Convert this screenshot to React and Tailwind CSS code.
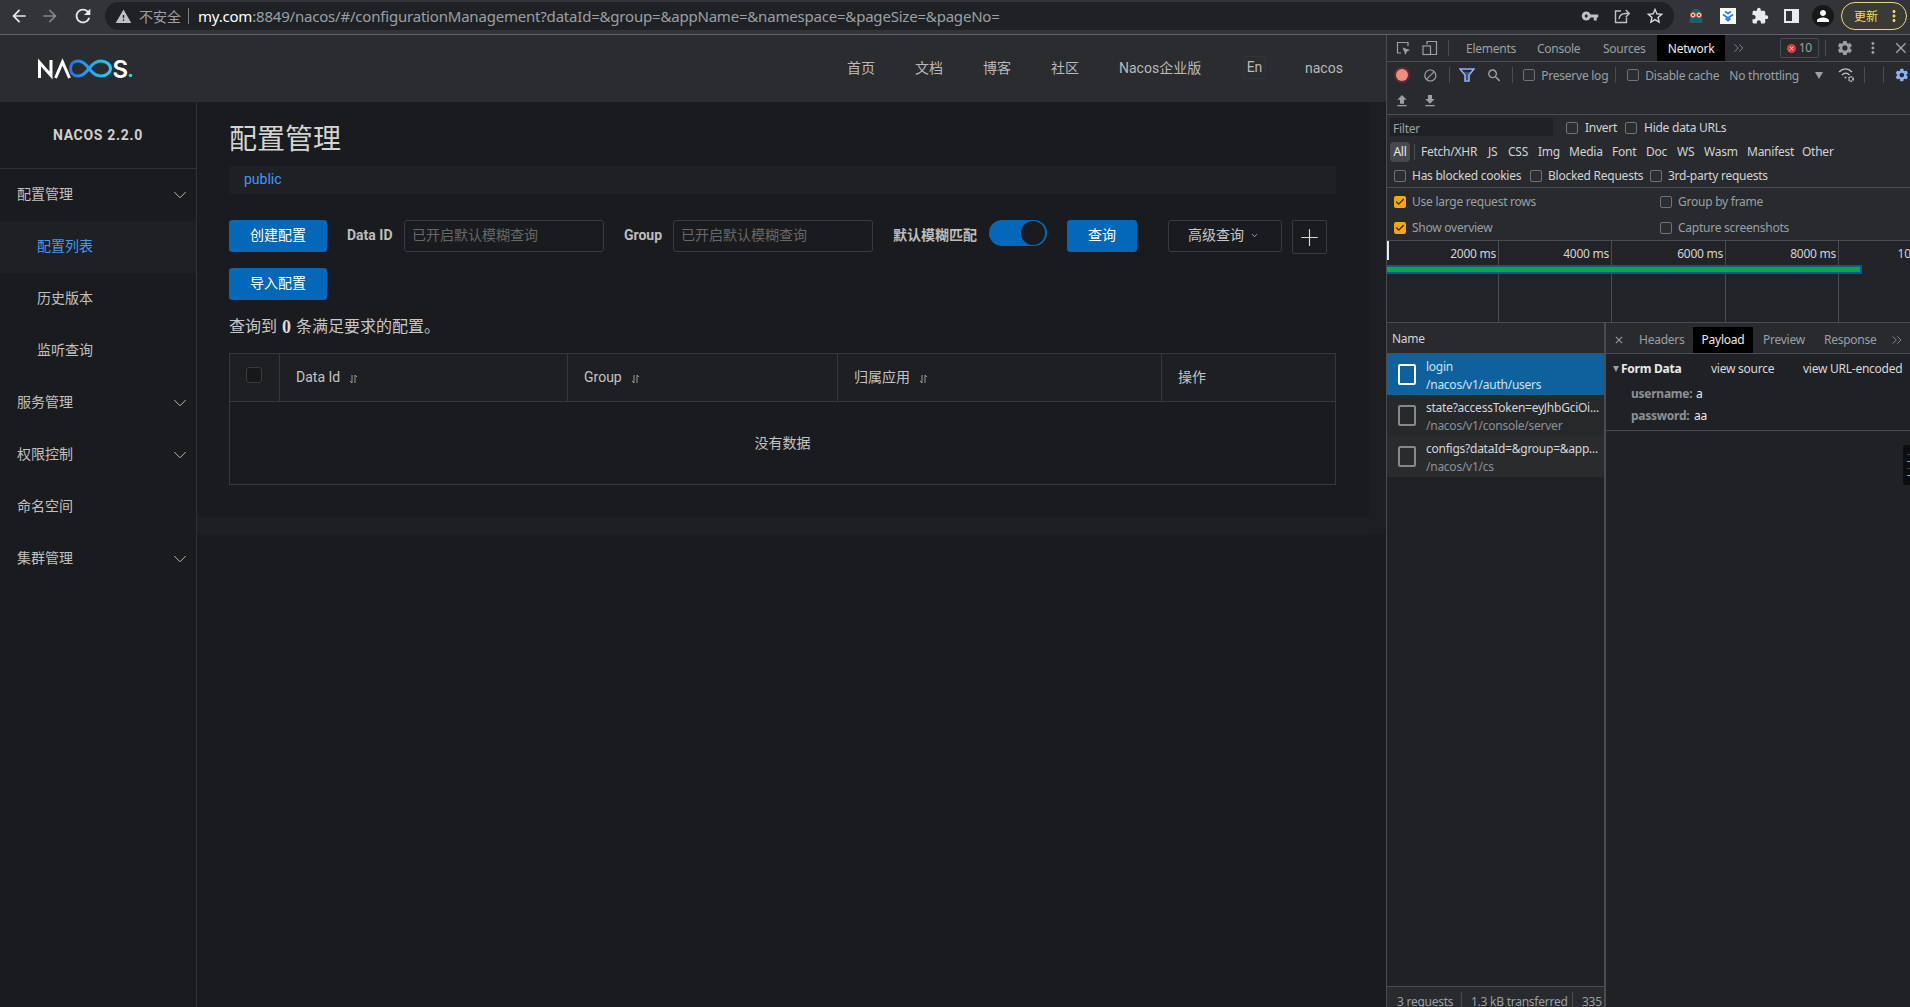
import React from "react";
import { MdArrowBack, MdArrowForward, MdRefresh, MdWarning, MdVpnKey, MdStarBorder, MdExtension, MdPerson, MdSettings, MdSearch, MdBlock, MdClose, MdMoreVert, MdFileUpload, MdFileDownload } from "react-icons/md";
import { ChevronDown, ChevronsRight, Plus, Check } from "lucide-react";

const APP = "font-['Roboto','Noto_Sans_CJK_SC',sans-serif]";
const DT = "font-['Noto_Sans','Noto_Sans_CJK_SC',sans-serif]";

function Logo() {
  return (
    <svg width="97" height="20" viewBox="0 0 97 20" className="block overflow-visible">
      <defs>
        <linearGradient id="inf" x1="0" x2="1" y1="0" y2="0">
          <stop offset="0" stopColor="#2b6ff0" />
          <stop offset="0.5" stopColor="#1fa8f0" />
          <stop offset="1" stopColor="#1fd0f0" />
        </linearGradient>
      </defs>
      <path d="M2.500 19V3.500L14 16.500V1" fill="none" stroke="#fff" strokeWidth="3" />
      <path d="M18.500 19L25.500 3L32.500 19" fill="none" stroke="#fff" strokeWidth="3" />
      <path d="M52 9.500C48 4 45 2 41 2C36 2 33.500 5.500 33.500 9.500C33.500 13.500 36 17 41 17C45 17 48 15 52 9.500C56 4 59 2 64 2C69 2 73.500 5.500 73.500 9.500C73.500 13.500 69 17 64 17C59 17 56 15 52 9.500Z" fill="none" stroke="url(#inf)" strokeWidth="3" />
      <text x="75.500" y="18.500" fontFamily="Inter, sans-serif" fontWeight="600" fontSize="24" fill="#fff">S</text>
      <circle cx="93.500" cy="16.500" r="1.800" fill="#22d3ee" />
    </svg>
  );
}

function Share() {
  return (
    <svg width="18" height="18" viewBox="0 0 18 18" fill="none" stroke="#bdc1c6" strokeWidth="1.400" className="block">
      <path d="M8 4H2.500V15.500H13.500V10.500" />
      <path d="M6 12C6.500 8.500 9 6.500 12.500 6.500H16M12.800 3L16.300 6.500L12.800 10" />
    </svg>
  );
}

function Owl() {
  return (
    <svg width="16" height="16" viewBox="0 0 16 16" className="block">
      <path d="M1 15L3.500 4C4 1.500 6 1 8 1S12 1.500 12.500 4L15 15Z" fill="#1d5f6b" />
      <circle cx="5" cy="7" r="2.500" fill="#f4f0e8" stroke="#e0592a" />
      <circle cx="11" cy="7" r="2.500" fill="#f4f0e8" stroke="#e0592a" />
      <circle cx="5" cy="7" r="1" fill="#222" />
      <circle cx="11" cy="7" r="1" fill="#222" />
    </svg>
  );
}

function BlueExt() {
  return (
    <div className="w-4 h-4 bg-white flex items-center justify-center">
      <svg width="12" height="12" viewBox="0 0 12 12" fill="none" stroke="#2b7cf0" strokeWidth="1.800" className="block">
        <path d="M3 1.500L6 3.500L9 1.500M1 4.500L6 8L11 4.500M3.500 8.500L6 10.500L8.500 8.500" />
      </svg>
    </div>
  );
}

function ChromeBar() {
  return (
    <div className="h-[35px] shrink-0 flex items-stretch bg-[#323437] border-b border-[#5f6164] pt-[2px] pb-[4px] pl-[9px]">
      <div className="flex items-center text-[#e8eaed]">
        <MdArrowBack size={20} />
        <MdArrowForward size={20} className="ml-[11px] text-[#80868b]" />
        <MdRefresh size={22} className="ml-[12px]" />
      </div>
      <div className="ml-[11px] w-[1569px] h-[28px] rounded-full bg-[#202124] flex items-center pl-[10px] pr-[9px] font-['Noto_Sans','Noto_Sans_CJK_SC',sans-serif] text-[15px]">
        <MdWarning size={17} className="text-[#bdc1c6] shrink-0" />
        <span className="ml-[7px] text-[14px] text-[#9aa0a6] whitespace-nowrap">不安全</span>
        <span className="ml-[7px] w-px h-[16px] bg-[#7a7d81]" />
        <span className="ml-[9px] flex-1 whitespace-nowrap text-[#9aa0a6] tracking-[-0.2px]"><span className="text-white">my.com</span>:8849/nacos/#/configurationManagement?dataId=&group=&appName=&namespace=&pageSize=&pageNo=</span>
        <div className="flex items-center gap-[14px]">
          <MdVpnKey size={18} className="text-[#bdc1c6]" />
          <Share />
          <MdStarBorder size={20} className="text-[#dadce0]" />
        </div>
      </div>
      <div className="ml-[14px] flex items-center">
        <Owl />
        <div className="ml-4"><BlueExt /></div>
        <MdExtension size={18} className="ml-[15px] text-[#e8eaed]" />
        <div className="ml-[15px] w-[15px] h-[14px] bg-[#e8eaed] flex justify-start p-[2px]"><div className="w-[6px] h-full bg-[#323437]" /></div>
        <div className="ml-[13px] w-[22px] h-[22px] rounded-full bg-[#17181a] flex items-center justify-center"><MdPerson size={18} className="text-white" /></div>
        <div className="ml-[7px] w-[66px] h-[28px] rounded-full border border-[#f1d57a] bg-[#3a3b36] flex items-center pl-[12px] text-[12px] whitespace-nowrap font-['Noto_Sans_CJK_SC',sans-serif] text-[#fdd663]">
          <span>更新</span>
          <MdMoreVert size={18} className="ml-[7px]" />
        </div>
      </div>
    </div>
  );
}

function NavHeader() {
  return (
    <div className={`h-[67px] shrink-0 bg-[#2b2c2f] flex items-center pl-[37px] pr-[40px] text-[14px] text-[#b9b9b9] ${APP}`}>
      <Logo />
      <div className="ml-auto flex items-center gap-10 whitespace-nowrap">
        <span className="w-[28px]">首页</span>
        <span className="w-[28px]">文档</span>
        <span className="w-[28px]">博客</span>
        <span className="w-[28px]">社区</span>
        <span className="w-[84px]">Nacos企业版</span>
        <span className="w-[23px] h-[23px] -mt-[2px] flex items-center justify-center rounded-[2px] border border-[#333438]">En</span>
        <span className="w-[41px] -ml-px">nacos</span>
      </div>
    </div>
  );
}

function MenuRow({ label, arrow, active, sub }) {
  return (
    <div className={`h-[52px] flex items-center ${sub ? "pl-[37px]" : "pl-[17px]"} pr-[5px] ${active ? "bg-[#1f2023] text-[#3d9bf5]" : "text-[#c0c0c0]"}`}>
      <span className="flex-1 pb-[2px]">{label}</span>
      {arrow && <ChevronDown size={22} strokeWidth={1} className="text-[#c8c8c8]" />}
    </div>
  );
}

function Sidebar() {
  return (
    <div className={`w-[197px] shrink-0 border-r border-[#303134] bg-[#1a1b1e] text-[14px] ${APP}`}>
      <div className="h-[67px] border-b border-[#303134] flex items-center justify-center font-bold text-[#d0d0d0] text-[14px] tracking-[0.7px]">NACOS 2.2.0</div>
      <MenuRow label="配置管理" arrow />
      <MenuRow label="配置列表" sub active />
      <MenuRow label="历史版本" sub />
      <MenuRow label="监听查询" sub />
      <MenuRow label="服务管理" arrow />
      <MenuRow label="权限控制" arrow />
      <MenuRow label="命名空间" />
      <MenuRow label="集群管理" arrow />
    </div>
  );
}

function Btn({ children, className = "" }) {
  return <div className={`h-8 rounded-[3px] bg-[#0468b8] text-white flex items-center justify-center text-[14px] pb-[2px] ${className}`}>{children}</div>;
}

function SortIcon() {
  return (
    <svg width="9" height="10" viewBox="0 0 9 10" fill="none" stroke="#9a9a9a" strokeWidth="1" className="block ml-[9px] mt-[3px] shrink-0">
      <path d="M3 1V9M1 7L3 9M6 9V1M6 1L8 3" />
    </svg>
  );
}

function Main() {
  return (
    <div className={`flex-1 min-w-0 bg-[#1a1b1e] ${APP}`}>
      <div className="h-[432px] flex">
        <div className="w-[1172px] h-full flex flex-col">
          <div className="pl-8 pr-[33px]">
            <div className="pt-5 text-[28px] leading-[36px] text-[#d4d4d4]">配置管理</div>
            <div className="mt-2 h-7 bg-[#1f2023] pl-[15px] pb-[2px] flex items-center text-[14px] text-[#3d9bf5]">public</div>
            <div className="mt-[26px] flex items-start text-[14px] whitespace-nowrap">
              <Btn className="w-[98px]">创建配置</Btn>
              <span className="ml-5 w-[45px] h-8 pb-[2px] flex items-center font-bold text-[#bdbdbd]">Data ID</span>
              <div className="ml-3 w-[200px] h-8 rounded-[3px] border border-[#3a3b3e] pl-[7px] pb-[2px] flex items-center text-[#676767]">已开启默认模糊查询</div>
              <span className="ml-5 w-[37px] h-8 pb-[2px] flex items-center font-bold text-[#bdbdbd]">Group</span>
              <div className="ml-3 w-[200px] h-8 rounded-[3px] border border-[#3a3b3e] pl-[7px] pb-[2px] flex items-center text-[#676767]">已开启默认模糊查询</div>
              <span className="ml-5 w-[84px] h-8 pb-[2px] flex items-center font-bold text-[#bdbdbd]">默认模糊匹配</span>
              <div className="ml-3 w-[58px] h-[26px] rounded-full bg-[#0468b8] flex items-center justify-end pr-[2px]">
                <div className="w-6 h-6 rounded-full bg-[#1a1b1e]" />
              </div>
              <Btn className="ml-5 w-[70px]">查询</Btn>
              <div className="ml-[31px] w-[114px] h-8 rounded-[3px] border border-[#3a3b3e] pr-[3px] pb-[2px] flex items-center justify-center text-[#c8c8c8]">
                <span>高级查询</span>
                <ChevronDown size={9} className="ml-[6px]" />
              </div>
              <div className="ml-[10px] w-[35px] h-[34px] rounded-[2px] border border-[#3a3b3e] flex items-center justify-center text-[#d8d8d8]">
                <Plus size={27} strokeWidth={1} />
              </div>
            </div>
            <Btn className="mt-[14px] w-[98px]">导入配置</Btn>
            <div className="mt-[15px] h-6 flex items-center text-[16px] text-[#c8c8c8] whitespace-nowrap">
              查询到<b className="mx-[5px] text-[18px] font-['Liberation_Serif',serif] text-[#dcdcdc]">0</b>条满足要求的配置。
            </div>
            <div className="mt-[14px] border border-[#37383b] text-[14px] text-[#c4c4c4]">
              <div className="grid grid-cols-[50px_288px_270px_324px_173px] h-[48px] bg-[#1e1f22] border-b border-[#37383b]">
                <div className="border-r border-[#37383b] pl-4 pt-[13px]">
                  <div className="w-4 h-4 rounded-[3px] border border-[#3a3b3e] bg-[#17181a]" />
                </div>
                <div className="border-r border-[#37383b] pl-4 flex items-center"><span>Data Id</span><SortIcon /></div>
                <div className="border-r border-[#37383b] pl-4 flex items-center"><span>Group</span><SortIcon /></div>
                <div className="border-r border-[#37383b] pl-4 flex items-center"><span>归属应用</span><SortIcon /></div>
                <div className="pl-4 flex items-center">操作</div>
              </div>
              <div className="h-[82px] flex items-center justify-center">没有数据</div>
            </div>
          </div>
          <div className="mt-auto h-[17px] bg-[#1e1f22]" />
        </div>
        <div className="flex-1 bg-[#1d1e21]" />
      </div>
    </div>
  );
}

function Cb({ on, className = "" }) {
  return on ? (
    <div className={`w-3 h-3 rounded-[2px] bg-[#fca700] flex items-center justify-center shrink-0 ${className}`}><Check size={10} strokeWidth={3} className="text-[#202124]" /></div>
  ) : (
    <div className={`w-3 h-3 rounded-[2px] border border-[#6f7276] bg-[#2c2d30] shrink-0 ${className}`} />
  );
}

function Sep({ className = "" }) {
  return <span className={`w-px h-[16px] bg-[#494c50] shrink-0 ${className}`} />;
}

function InspectIcon() {
  return (
    <svg width="15" height="15" viewBox="0 0 15 15" fill="none" stroke="#9aa0a6" strokeWidth="1.200" className="block shrink-0">
      <path d="M5 12H1.500V1.500H12V5" />
      <path d="M6.500 6.500L14 9L11 10.500L9.500 14Z" fill="#9aa0a6" stroke="none" />
    </svg>
  );
}

function DeviceIcon() {
  return (
    <svg width="16" height="16" viewBox="0 0 16 16" fill="none" stroke="#9aa0a6" strokeWidth="1.200" className="block shrink-0">
      <path d="M5 4.500V1.500H14.500V14.500H9" />
      <rect x="1" y="6" width="7.500" height="8.500" />
    </svg>
  );
}

function FunnelIcon() {
  return (
    <svg width="16" height="14" viewBox="0 0 16 14" fill="none" stroke="#8ab4f8" strokeWidth="1.600" className="block shrink-0">
      <path d="M1 1H15L10 7V13H6V7Z" />
      <path d="M4 4H12L10 7V12H6V7Z" fill="#8ab4f8" fillOpacity="0.300" stroke="none" />
    </svg>
  );
}

function WifiGear() {
  return (
    <svg width="17" height="16" viewBox="0 0 17 16" fill="none" stroke="#bdc1c6" strokeWidth="1.400" className="block shrink-0">
      <path d="M1 5C5 1 10 1 14 5M4 8C6.500 5.500 9 5.500 11.500 8" />
      <circle cx="7.500" cy="10.500" r="1" fill="#bdc1c6" stroke="none" />
      <circle cx="13" cy="12" r="2.200" strokeWidth="1.600" strokeDasharray="1.500 0.700" />
    </svg>
  );
}

function FileIcon({ on }) {
  return <div className={`w-[18px] h-[21px] rounded-[2px] border-2 shrink-0 ${on ? "border-white" : "border-[#85888c]"}`} />;
}

function Req({ name, path, on, className = "" }) {
  return (
    <div className={`h-[41px] flex items-center pl-[11px] pr-[2px] ${on ? "bg-[#0e619c]" : ""} ${className}`}>
      <FileIcon on={on} />
      <div className="ml-[10px] pt-[2px] min-w-0 flex-1 leading-[18px] text-[12px] tracking-[-0.25px]">
        <div className={`whitespace-nowrap overflow-hidden ${on ? "text-[#cfe2f2]" : "text-[#d5d7da]"}`}>{name}</div>
        <div className={`whitespace-nowrap ${on ? "text-[#cfe2f2]" : "text-[#8d9196]"}`}>{path}</div>
      </div>
    </div>
  );
}

function DevTools() {
  const border = "border-[#494c50]";
  return (
    <div className={`relative flex-1 min-w-0 h-[972px] overflow-hidden flex flex-col bg-[#292a2d] border-l ${border} text-[12px] tracking-[-0.25px] text-[#9aa0a6] ${DT}`}>
      <div className={`h-[27px] shrink-0 border-b ${border} flex items-center pl-[9px] whitespace-nowrap`}>
        <InspectIcon />
        <div className="ml-[11px]"><DeviceIcon /></div>
        <Sep className="ml-[10px]" />
        <span className="ml-[17px] w-[48px] pt-[2px]">Elements</span>
        <span className="ml-[23px] w-[43px] pt-[2px]">Console</span>
        <span className="ml-[23px] w-[42px] pt-[2px]">Sources</span>
        <span className="ml-[12px] w-[69px] self-stretch bg-black text-[#e8eaed] pt-[2px] flex items-center justify-center">Network</span>
        <ChevronsRight size={16} strokeWidth={1.2} className="ml-[6px]" />
        <div className={`ml-[33px] w-[39px] h-5 rounded-[2px] border ${border} flex items-center justify-center`}>
          <span className="w-[9px] h-[9px] rounded-full bg-[#e23a3f] flex items-center justify-center mr-[3px]"><MdClose size={7} className="text-white" /></span>
          <span>10</span>
        </div>
        <Sep className="ml-[6px]" />
        <MdSettings size={18} className="ml-[10px]" />
        <MdMoreVert size={18} className="ml-[11px]" />
        <MdClose size={18} className="ml-[10px]" />
      </div>

      <div className="h-[26px] shrink-0 flex items-center pl-[9px] whitespace-nowrap">
        <span className="w-3 h-3 rounded-full bg-[#f28b82] ring-[2px] ring-[#5a2f2e] shrink-0" />
        <MdBlock size={15} className="ml-[15px]" />
        <Sep className="ml-[11px]" />
        <div className="ml-[9px]"><FunnelIcon /></div>
        <MdSearch size={17} className="ml-[11px]" />
        <Sep className="ml-[10px]" />
        <Cb className="ml-[10px]" />
        <span className="ml-[6px] w-[64px] pt-[2px]">Preserve log</span>
        <Sep className="ml-[10px]" />
        <Cb className="ml-[11px]" />
        <span className="ml-[6px] w-[72px] pt-[2px]">Disable cache</span>
        <span className="ml-3 w-[68px] pt-[2px]">No throttling</span>
        <span className="ml-[18px] w-0 h-0 border-l-[4px] border-r-[4px] border-t-[7px] border-l-transparent border-r-transparent border-t-[#9aa0a6]" />
        <div className="ml-[15px]"><WifiGear /></div>
        <Sep className="ml-[9px]" />
        <Sep className="ml-[18px]" />
        <MdSettings size={16} className="ml-[10px] text-[#8ab4f8]" />
      </div>

      <div className={`h-[27px] shrink-0 border-b ${border} flex items-center pl-[7px] text-[#9aa0a6]`}>
        <MdFileUpload size={16} />
        <MdFileDownload size={16} className="ml-3" />
      </div>

      <div className="h-[24px] shrink-0 flex items-start pl-[3px] pt-[3px] text-[#d2d4d7] whitespace-nowrap">
        <div className="w-[163px] h-[18px] bg-[#202124] pl-[3px] leading-[21px] text-[#9aa0a6]">Filter</div>
        <Cb className="ml-[13px] mt-[4px]" />
        <span className="ml-[7px] w-[30px] leading-[19px]">Invert</span>
        <Cb className="ml-[10px] mt-[4px]" />
        <span className="ml-[7px] leading-[19px]">Hide data URLs</span>
      </div>

      <div className="h-[26px] shrink-0 flex items-center pl-[3px] text-[#d2d4d7] whitespace-nowrap">
        <span className="w-[20px] h-[20px] rounded-[4px] bg-[#47494c] text-[#e8eaed] flex items-center justify-center">All</span>
        <Sep className="ml-1" />
        <span className="ml-[6px] w-[56px]">Fetch/XHR</span>
        <span className="ml-[11px] w-[10px]">JS</span>
        <span className="ml-[10px] w-[20px]">CSS</span>
        <span className="ml-[10px] w-[20px]">Img</span>
        <span className="ml-[11px] w-[33px]">Media</span>
        <span className="ml-[10px] w-[24px]">Font</span>
        <span className="ml-[10px] w-[21px]">Doc</span>
        <span className="ml-[10px] w-[17px]">WS</span>
        <span className="ml-[10px] w-[32px]">Wasm</span>
        <span className="ml-[11px] w-[46px]">Manifest</span>
        <span className="ml-[9px] w-[31px]">Other</span>
      </div>

      <div className={`h-[23px] shrink-0 border-b ${border} flex items-center pl-[7px] text-[#d2d4d7] whitespace-nowrap`}>
        <Cb />
        <span className="ml-[6px] w-[108px]">Has blocked cookies</span>
        <Cb className="ml-[10px]" />
        <span className="ml-[6px] w-[92px]">Blocked Requests</span>
        <Cb className="ml-[10px]" />
        <span className="ml-[6px]">3rd-party requests</span>
      </div>

      <div className="h-[27px] shrink-0 flex items-center pl-[7px] whitespace-nowrap">
        <Cb on />
        <span className="ml-[6px] w-[248px]">Use large request rows</span>
        <Cb />
        <span className="ml-[6px]">Group by frame</span>
      </div>
      <div className={`h-[26px] shrink-0 border-b ${border} flex items-center pl-[7px] whitespace-nowrap`}>
        <Cb on />
        <span className="ml-[6px] w-[248px]">Show overview</span>
        <Cb />
        <span className="ml-[6px]">Capture screenshots</span>
      </div>

      <div className={`relative h-[82px] shrink-0 border-b ${border} bg-[#222327] overflow-hidden`}>
        <div className="grid grid-cols-[112px_113px_114px_113px_113px] w-[565px] h-full text-[#d2d4d7]">
          <div className={`border-r ${border} text-right pr-[2px] pt-[4px]`}>2000 ms</div>
          <div className={`border-r ${border} text-right pr-[2px] pt-[4px]`}>4000 ms</div>
          <div className={`border-r ${border} text-right pr-[2px] pt-[4px]`}>6000 ms</div>
          <div className={`border-r ${border} text-right pr-[2px] pt-[4px]`}>8000 ms</div>
          <div className="text-right pr-[2px] pt-[4px]">10000 ms</div>
        </div>
        <div className="absolute left-0 top-[24px] w-[475px] h-[9px] bg-[#0c5a94] py-[2px] pr-[2px]"><div className="h-full bg-[#09a64c]" /></div>
        <div className="absolute left-0 top-0 w-[2px] h-[19px] bg-[#e8eaed]" />
      </div>

      <div className="flex-1 min-h-0 flex bg-[#202124]">
        <div className="w-[219px] shrink-0 border-r-2 border-[#494c50] flex flex-col">
          <div className={`h-[31px] shrink-0 bg-[#292a2d] border-b ${border} flex items-center pl-[5px] pt-[2px] text-[#d2d4d7]`}>Name</div>
          <Req on name="login" path="/nacos/v1/auth/users" />
          <Req name="state?accessToken=eyJhbGciOi..." path="/nacos/v1/console/server" className="bg-[#27282a]" />
          <Req name="configs?dataId=&group=&app..." path="/nacos/v1/cs" className="bg-[#2a2b2d]" />
          <div className={`mt-auto h-[21px] shrink-0 border-t ${border} bg-[#292a2d] flex items-start pt-[6px] pl-[10px] text-[#9aa0a6] whitespace-nowrap overflow-hidden`}>
            <span className="w-[55px]">3 requests</span>
            <Sep className="ml-[9px] -mt-px" />
            <span className="ml-[9px] w-[92px]">1.3 kB transferred</span>
            <Sep className="ml-[9px] -mt-px" />
            <span className="ml-[9px]">335</span>
          </div>
        </div>
        <div className="flex-1 min-w-0 flex flex-col">
          <div className={`h-[31px] shrink-0 border-b ${border} bg-[#292a2d] flex items-end pl-[7px] whitespace-nowrap`}>
            <div className="h-[26px] flex items-center"><MdClose size={12} /></div>
            <span className="ml-[14px] h-[26px] w-[44px] flex items-center">Headers</span>
            <span className="ml-[10px] h-[26px] w-[60px] bg-black text-[#e8eaed] flex items-center justify-center">Payload</span>
            <span className="ml-[10px] h-[26px] w-[41px] flex items-center">Preview</span>
            <span className="ml-[20px] h-[26px] w-[49px] flex items-center">Response</span>
            <div className="ml-[16px] h-[26px] flex items-center"><ChevronsRight size={16} strokeWidth={1.2} /></div>
          </div>
          <div className={`h-[77px] shrink-0 border-b ${border} text-[#d7d9dc]`}>
            <div className="h-[29px] flex items-center pl-[7px] whitespace-nowrap">
              <span className="w-0 h-0 border-l-[3.500px] border-r-[3.500px] border-t-[6px] border-l-transparent border-r-transparent border-t-[#9aa0a6]" />
              <b className="ml-[2px] w-[59px] text-[#e8eaed]">Form Data</b>
              <span className="ml-[31px] w-[62px]">view source</span>
              <span className="ml-[30px]">view URL-encoded</span>
            </div>
            <div className="h-[22px] flex items-center pl-[25px]"><b className="text-[#8d9196] w-[65px]">username:</b><span className="text-[#e8eaed]">a</span></div>
            <div className="h-[22px] flex items-center pl-[25px]"><b className="text-[#8d9196] w-[63px]">password:</b><span className="text-[#e8eaed]">aa</span></div>
          </div>
        </div>
      </div>
      <div className="absolute right-0 top-[410px] w-[7px] h-[40px] rounded-l-[3px] bg-[#0c0d0e] flex flex-col justify-center gap-[6px] pl-[4px]">
        <div className="h-px bg-[#444]" />
        <div className="h-px bg-[#e08a2c]" />
        <div className="h-px bg-[#444]" />
        <div className="h-px bg-[#7ec850]" />
      </div>
    </div>
  );
}

export default function App() {
  return (
    <div className="w-[1910px] h-[1007px] overflow-hidden flex flex-col bg-[#1a1b1e]">
      <ChromeBar />
      <div className="flex-1 min-h-0 flex">
        <div className="w-[1386px] shrink-0 flex flex-col">
          <NavHeader />
          <div className="flex-1 min-h-0 flex">
            <Sidebar />
            <Main />
          </div>
        </div>
        <DevTools />
      </div>
    </div>
  );
}
